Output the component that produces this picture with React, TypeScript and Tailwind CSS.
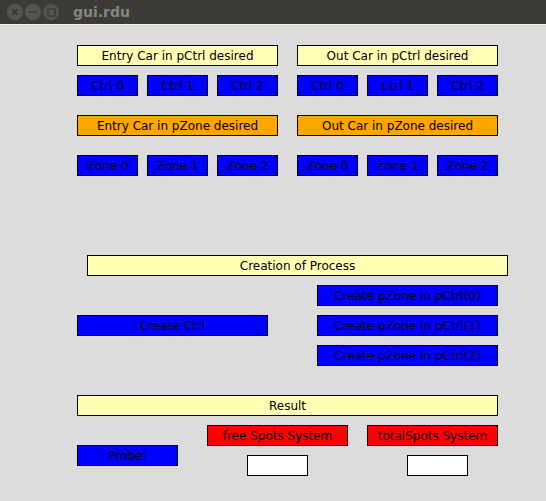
import React from "react";

const FONT = { fontFamily: '"DejaVu Sans", "Liberation Sans", sans-serif' };

function Box({
  text,
  w,
  color,
  className = "",
}: {
  text?: string;
  w: string;
  color: string;
  className?: string;
}) {
  return (
    <div
      className={`${w} ${color} ${className} h-[21px] shrink-0 border border-black flex items-center justify-center text-[12px] leading-none text-black whitespace-nowrap overflow-hidden`}
    >
      {text}
    </div>
  );
}

function TitleBar() {
  return (
    <div className="h-[24px] bg-[#3c3b37] flex items-center pl-[7px]">
      <div className="flex gap-[2px]">
        <span className="w-[16px] h-[16px] rounded-full bg-[#55544f] flex items-center justify-center">
          <svg width="8" height="8" viewBox="0 0 8 8">
            <path d="M1.5 1.5 L6.5 6.5 M6.5 1.5 L1.5 6.5" stroke="#3a3935" strokeWidth="1.8" />
          </svg>
        </span>
        <span className="w-[16px] h-[16px] rounded-full bg-[#55544f] flex items-center justify-center">
          <svg width="10" height="8" viewBox="0 0 10 8">
            <path d="M1 4 L9 4" stroke="#3a3935" strokeWidth="1.5" />
          </svg>
        </span>
        <span className="w-[16px] h-[16px] rounded-full bg-[#55544f] flex items-center justify-center">
          <svg width="9" height="9" viewBox="0 0 9 9">
            <rect x="1" y="1" width="7" height="7" fill="none" stroke="#3a3935" strokeWidth="1.3" />
          </svg>
        </span>
      </div>
      <span className="ml-[14px] text-[14px] font-bold text-[#85847f]">gui.rdu</span>
    </div>
  );
}

function ButtonRow({ prefix }: { prefix: string }) {
  return (
    <div className="flex gap-[9px]">
      {[0, 1, 2].map((i) => (
        <Box key={i} text={`${prefix} ${i}`} w="w-[61px]" color="bg-[#0000ff]" />
      ))}
    </div>
  );
}

export default function App() {
  return (
    <div className="w-[546px] h-[501px] overflow-hidden bg-[#dcdcdc]" style={FONT}>
      <TitleBar />
      <div className="h-[1px] bg-[#f4f3f2]" />

      <div className="pt-[20px]">
        {/* pCtrl */}
        <div className="flex pl-[77px] gap-[19px]">
          <Box text="Entry Car in pCtrl desired" w="w-[201px]" color="bg-[#ffffb5]" />
          <Box text="Out Car in pCtrl desired" w="w-[201px]" color="bg-[#ffffb5]" />
        </div>
        <div className="flex pl-[77px] gap-[19px] mt-[9px]">
          <ButtonRow prefix="Ctrl" />
          <ButtonRow prefix="Ctrl" />
        </div>

        {/* pZone */}
        <div className="flex pl-[77px] gap-[19px] mt-[19px]">
          <Box text="Entry Car in pZone desired" w="w-[201px]" color="bg-[#ffa500]" />
          <Box text="Out Car in pZone desired" w="w-[201px]" color="bg-[#ffa500]" />
        </div>
        <div className="flex pl-[77px] gap-[19px] mt-[19px]">
          <ButtonRow prefix="Zone" />
          <ButtonRow prefix="Zone" />
        </div>

        {/* process */}
        <div className="pl-[87px] mt-[79px]">
          <Box text="Creation of Process" w="w-[421px]" color="bg-[#ffffb5]" />
        </div>
        <div className="flex mt-[9px] pl-[77px] items-center">
          <Box text="Create Ctrl" w="w-[191px]" color="bg-[#0000ff]" />
          <div className="flex flex-col gap-[9px] ml-[49px]">
            {[0, 1, 2].map((i) => (
              <Box key={i} text={`Create pZone in pCtrl(${i})`} w="w-[181px]" color="bg-[#0000ff]" />
            ))}
          </div>
        </div>

        {/* result */}
        <div className="pl-[77px] mt-[29px]">
          <Box text="Result" w="w-[421px]" color="bg-[#ffffb5]" />
        </div>
        <div className="flex pl-[77px] mt-[9px] items-start">
          <Box text="Probe!" w="w-[101px]" color="bg-[#0000ff]" className="mt-[20px]" />
          <div className="flex flex-col items-center gap-[9px] ml-[29px]">
            <Box text="free Spots System" w="w-[141px]" color="bg-[#ff0000]" />
            <Box w="w-[61px]" color="bg-white" />
          </div>
          <div className="flex flex-col gap-[9px] ml-[19px]">
            <Box text="totalSpots System" w="w-[131px]" color="bg-[#ff0000]" />
            <Box w="w-[61px]" color="bg-white" className="ml-[40px]" />
          </div>
        </div>
      </div>
    </div>
  );
}
